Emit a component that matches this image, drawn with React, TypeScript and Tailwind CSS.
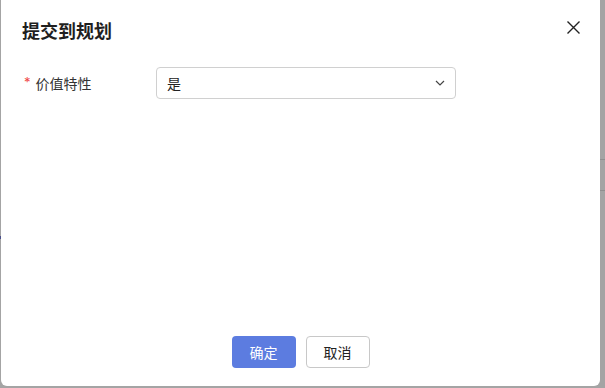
import React from 'react';

const font = { fontFamily: '"Inter", "Noto Sans CJK SC", sans-serif' };

const App: React.FC = () => {
  return (
    <div className="relative w-[605px] h-[388px] overflow-hidden bg-[#a4a4a4]" style={font}>
      {/* faint lines from the page behind the mask */}
      <div className="absolute right-0 top-[159px] w-[6px] h-px bg-[#8f8f8f]" />
      <div className="absolute right-0 top-[190px] w-[6px] h-px bg-[#8f8f8f]" />
      <div className="absolute left-0 top-[236px] w-[2px] h-[3px] bg-[#4a4f8a]" />

      <div className="absolute left-[1px] top-[-6px] w-[599px] h-[392px] bg-white rounded-[6px] flex flex-col">
        <div className="flex items-center justify-between pl-[21px] pr-[20px] pt-[26px] h-[50px]">
          <h2 className="text-[18px] font-bold text-[#1f1f1f] leading-none">提交到规划</h2>
          <button className="w-[14px] h-[14px] mb-[9px] flex items-center justify-center text-[#222]" title="关闭">
            <svg width="13" height="13" viewBox="0 0 13 13" fill="none" stroke="currentColor" strokeWidth="1.4">
              <path d="M0.5 0.5L12.5 12.5M12.5 0.5L0.5 12.5" />
            </svg>
          </button>
        </div>

        <div className="flex items-center mt-[23px] pl-[23px]">
          <label className="w-[132px] flex items-center text-[14px] text-[#333]">
            <span className="text-[#f04848] mr-[5px] text-[13px]">*</span>
            价值特性
          </label>
          <div className="w-[300px] h-[32px] border border-[#d0d0d0] rounded-[4px] flex items-center justify-between pl-[10px] pr-[10px] text-[14px] text-[#222]">
            <span>是</span>
            <svg width="10" height="6" viewBox="0 0 10 6" fill="none" stroke="#444" strokeWidth="1.2">
              <path d="M1 1L5 5L9 1" />
            </svg>
          </div>
        </div>

        <div className="flex-1" />

        <div className="flex justify-center gap-[10px] pb-[18px]">
          <button className="w-[64px] h-[32px] rounded-[4px] bg-[#5c7ce0] text-white text-[14px]">确定</button>
          <button className="w-[64px] h-[32px] rounded-[4px] border border-[#c8c8c8] bg-white text-[#222] text-[14px]">取消</button>
        </div>
      </div>
    </div>
  );
};

export default App;
